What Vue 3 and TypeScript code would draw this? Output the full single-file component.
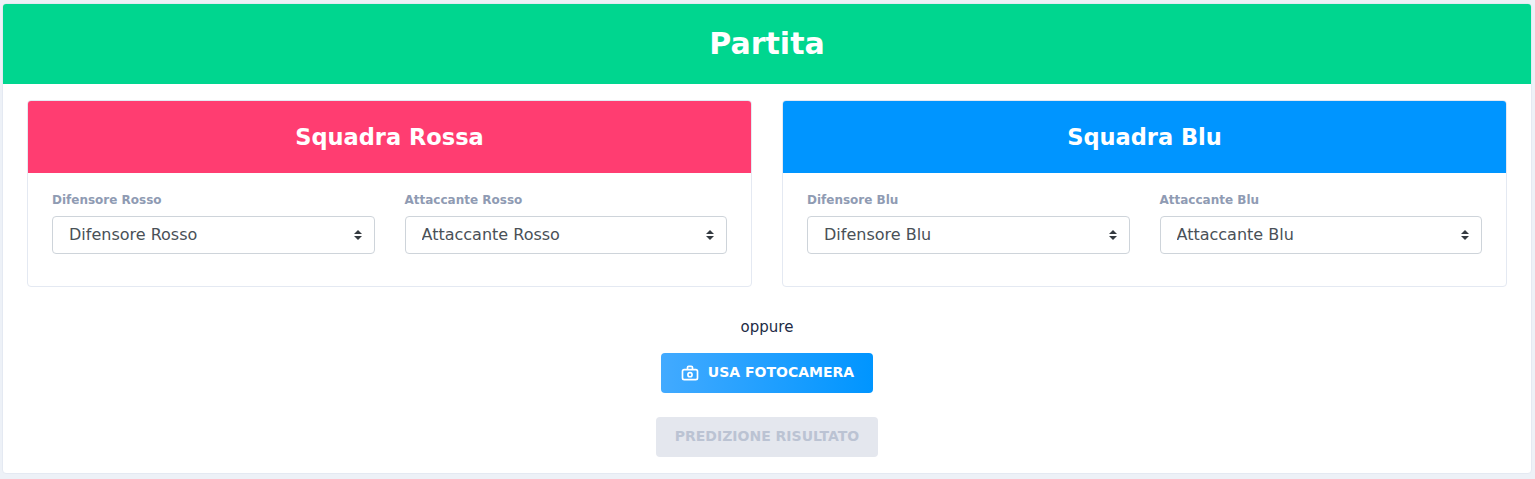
<script setup lang="ts">
import { reactive } from 'vue'

interface Team {
  name: string
  tone: 'danger' | 'info'
  roles: string[]
}

const teams: Team[] = [
  { name: 'Squadra Rossa', tone: 'danger', roles: ['Difensore Rosso', 'Attaccante Rosso'] },
  { name: 'Squadra Blu', tone: 'info', roles: ['Difensore Blu', 'Attaccante Blu'] },
]

const selected = reactive<Record<string, string>>(
  Object.fromEntries(teams.flatMap((t) => t.roles).map((r) => [r, r])),
)
</script>

<template>
  <main class="page">
    <section class="match">
      <header class="match-header">Partita</header>
      <div class="match-body">
        <div class="teams">
          <section v-for="team in teams" :key="team.name" class="team">
            <header class="team-header" :class="team.tone">{{ team.name }}</header>
            <div class="team-body">
              <label v-for="role in team.roles" :key="role" class="field">
                <span class="field-label">{{ role }}</span>
                <select v-model="selected[role]" class="select">
                  <option :value="role">{{ role }}</option>
                </select>
              </label>
            </div>
          </section>
        </div>
        <p class="or">oppure</p>
        <button type="button" class="btn camera">
          <svg class="icon" viewBox="0 0 24 24" fill="currentColor" fill-rule="evenodd">
            <path d="M19 7h-3V5.500A2.500 2.500 0 0 0 13.500 3h-3A2.500 2.500 0 0 0 8 5.500V7H5a3 3 0 0 0-3 3v8a3 3 0 0 0 3 3h14a3 3 0 0 0 3-3v-8a3 3 0 0 0-3-3zm-9-1.500a.5.5 0 0 1 .5-.5h3a.5.5 0 0 1 .5.5V7h-4zM20 18a1 1 0 0 1-1 1H5a1 1 0 0 1-1-1v-8a1 1 0 0 1 1-1h14a1 1 0 0 1 1 1z" />
            <path d="M12 10.500a3.500 3.500 0 1 0 0 7 3.500 3.500 0 0 0 0-7zm0 5a1.500 1.500 0 1 1 0-3 1.500 1.500 0 0 1 0 3z" />
          </svg>
          <span class="btn-text">USA FOTOCAMERA</span>
        </button>
        <button type="button" class="btn predict" disabled>
          <span class="btn-text">PREDIZIONE RISULTATO</span>
        </button>
      </div>
    </section>
  </main>
</template>

<style>
body {
  background: #edf1f7;
}
</style>

<style scoped>
.page,
.page * {
  box-sizing: border-box;
}
.page {
  height: 479px;
  padding: 3px 3px 0 2px;
  overflow: hidden;
  background: #edf1f7;
  color: #222b45;
  font-family: "DejaVu Sans", sans-serif;
  font-size: 15px;
  line-height: 20px;
}
.match {
  height: 471px;
  border: 1px solid #e4e9f2;
  border-radius: 4px;
  background: #fff;
}
.match-header {
  height: 80px;
  border-radius: 3px 3px 0 0;
  background: #00d68f;
  color: #fff;
  font-size: 30px;
  font-weight: 700;
  line-height: 80px;
  text-align: center;
}
.match-body {
  display: flex;
  flex-direction: column;
  align-items: center;
  padding: 16px 24px;
}
.teams {
  display: grid;
  grid-template-columns: 1fr 1fr;
  gap: 30px;
  width: 100%;
}
.team {
  height: 187px;
  border: 1px solid #e4e9f2;
  border-radius: 4px;
}
.team-header {
  height: 72px;
  border-radius: 3px 3px 0 0;
  color: #fff;
  font-size: 22.5px;
  font-weight: 700;
  line-height: 72px;
  text-align: center;
}
.danger {
  background: #ff3d71;
}
.info {
  background: #0095ff;
}
.team-body {
  display: grid;
  grid-template-columns: 1fr 1fr;
  gap: 30px;
  padding: 19px 24px 0;
}
.field {
  display: block;
  min-width: 0;
}
.field-label {
  display: block;
  margin-bottom: 8px;
  color: #8f9bb3;
  font-size: 12px;
  font-weight: 700;
  line-height: 16px;
}
.select {
  display: block;
  width: 100%;
  height: 38px;
  margin: 0;
  padding: 6px 28px 6px 16px;
  border: 1px solid #ced4da;
  border-radius: 4px;
  appearance: none;
  background: #fff url("data:image/svg+xml,%3csvg xmlns='http://www.w3.org/2000/svg' viewBox='0 0 4 5'%3e%3cpath fill='%23343a40' d='M2 0L0 2h4zm0 5L0 3h4z'/%3e%3c/svg%3e") no-repeat right 12px center / 8px 10px;
  color: #495057;
  font-family: inherit;
  font-size: 16px;
  line-height: 24px;
}
.or {
  margin: 30px 0 16px;
}
.btn {
  display: flex;
  align-items: center;
  justify-content: center;
  height: 40px;
  margin: 0;
  padding: 0;
  border: 0;
  border-radius: 4px;
  font-family: inherit;
  font-size: 14px;
  font-weight: 700;
  line-height: 16px;
}
.btn-text {
  padding-bottom: 2px;
}
.btn.camera {
  gap: 8px;
  width: 212px;
  background: linear-gradient(to right, #42aaff, #0095ff);
  color: #fff;
}
.icon {
  width: 20px;
  height: 20px;
}
.btn.predict {
  width: 222px;
  margin-top: 24px;
  background: #e4e7ee;
  color: #bbc3d3;
}
</style>
